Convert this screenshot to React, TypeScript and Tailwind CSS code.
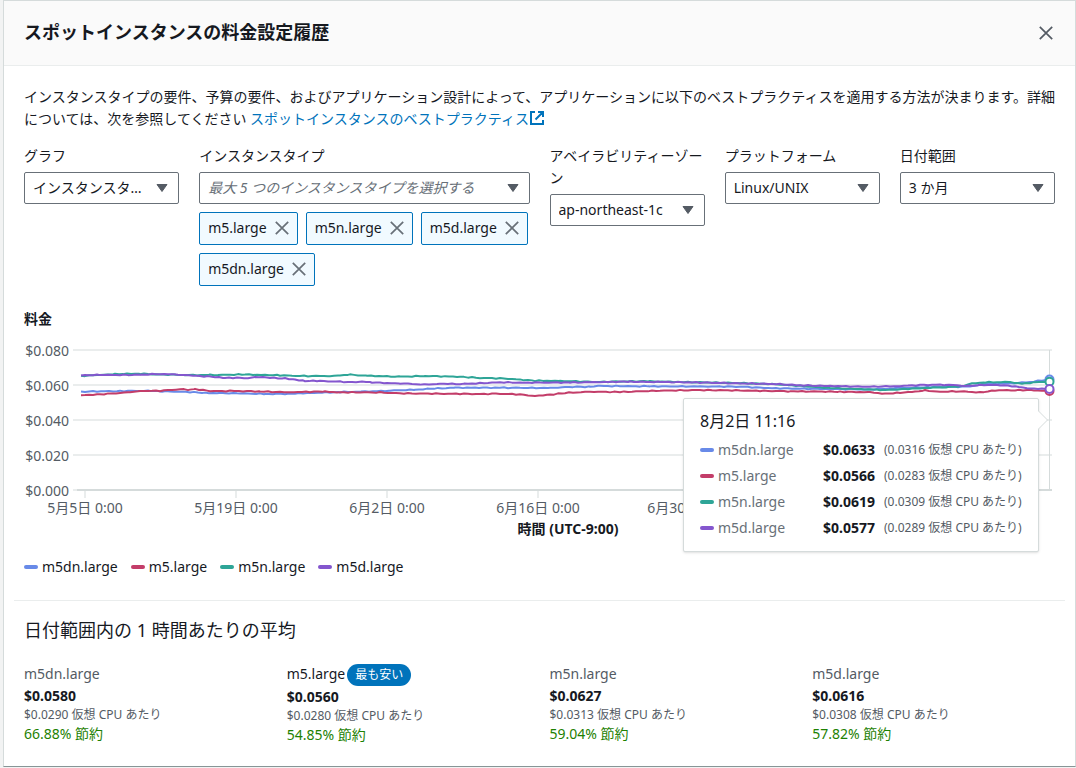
import React, { useState } from 'react';

type Point = [number, number];

interface Series {
  name: string;
  color: string;
  swatch: string;
  price: string;
  vcpu: string;
  endY: number;
  points: Point[];
}

interface Average {
  name: string;
  price: string;
  vcpu: string;
  savings: string;
  cheapest?: boolean;
}

const SERIES: Series[] = [
  {
    name: 'm5dn.large',
    color: '#688ae8',
    swatch: 'bg-[#688ae8]',
    price: '$0.0633',
    vcpu: '(0.0316 仮想 CPU あたり)',
    endY: 379.5,
    points: [
      [81, 391.7], [120, 391], [150, 391], [190, 392], [205, 393], [240, 393.3], [265, 394], [295, 393.7],
      [310, 393], [340, 392], [361, 391.7], [390, 390.7], [415, 389.7], [430, 388.7], [455, 387.7], [500, 387.7],
      [550, 388], [565, 387], [590, 386.7], [600, 386], [650, 386.3], [700, 386.5], [740, 386.7], [776, 388.3],
      [830, 389], [870, 389.5], [900, 388], [930, 387], [950, 387], [970, 386.3], [985, 384], [1010, 383.5],
      [1030, 382], [1049, 379.5],
    ],
  },
  {
    name: 'm5.large',
    color: '#c33d69',
    swatch: 'bg-[#c33d69]',
    price: '$0.0566',
    vcpu: '(0.0283 仮想 CPU あたり)',
    endY: 391,
    points: [
      [81, 395.3], [100, 394.3], [130, 392.3], [140, 391], [160, 390.7], [180, 389.3], [190, 389.7], [195, 389],
      [210, 391], [235, 391], [260, 391.5], [290, 392.3], [310, 391.7], [325, 391.7], [340, 392.3], [380, 392.5],
      [400, 393.3], [440, 393.7], [480, 394], [500, 393.7], [520, 394.5], [535, 396], [550, 394.7], [565, 393],
      [590, 391.7], [620, 392], [660, 390.7], [700, 390], [740, 390.5], [790, 391.3], [840, 391.7], [870, 392.3],
      [885, 393.7], [900, 392.7], [915, 391.7], [925, 390.5], [940, 391.7], [960, 391.3], [980, 392.5], [995, 390.3],
      [1015, 390.3], [1030, 390], [1049, 391],
    ],
  },
  {
    name: 'm5n.large',
    color: '#2ea597',
    swatch: 'bg-[#2ea597]',
    price: '$0.0619',
    vcpu: '(0.0309 仮想 CPU あたり)',
    endY: 381.7,
    points: [
      [81, 375.9], [100, 375], [115, 374], [140, 373.7], [160, 374.5], [185, 375], [210, 375], [245, 374.5],
      [280, 375.3], [300, 376], [330, 376], [340, 375.5], [350, 374.7], [367, 375.7], [400, 376.7], [425, 376],
      [460, 376.7], [480, 378], [500, 378.3], [512, 379], [535, 380.7], [560, 381], [600, 382], [620, 381.5],
      [650, 381.3], [680, 382], [740, 383], [776, 384.3], [800, 386], [830, 388], [860, 389], [885, 390],
      [900, 389.3], [930, 387.7], [960, 386.5], [972, 383.5], [985, 382.3], [1010, 382], [1022, 383.7], [1035, 382.3],
      [1049, 381.7],
    ],
  },
  {
    name: 'm5d.large',
    color: '#8456ce',
    swatch: 'bg-[#8456ce]',
    price: '$0.0577',
    vcpu: '(0.0289 仮想 CPU あたり)',
    endY: 389,
    points: [
      [81, 375.3], [100, 374.8], [120, 375], [140, 374.7], [160, 374], [170, 374.3], [185, 375], [200, 376],
      [215, 377], [225, 378], [240, 377.7], [248, 378.3], [255, 377], [270, 377.7], [285, 378.5], [295, 379.5],
      [305, 381], [320, 381], [340, 381.7], [352, 382.3], [362, 381.5], [372, 382.3], [387, 383.3], [400, 383.3],
      [425, 384.7], [440, 383.7], [460, 384], [480, 383.3], [500, 382.3], [520, 382.7], [545, 382.5], [570, 382.5],
      [600, 382], [630, 381.7], [660, 382], [700, 382.5], [740, 383.3], [776, 384], [800, 385.3], [830, 386],
      [870, 386.7], [900, 386], [920, 385], [945, 384.7], [970, 386], [980, 385], [1000, 385], [1015, 386.5],
      [1030, 388.5], [1049, 389],
    ],
  },
];

const AVERAGES: Average[] = [
  { name: 'm5dn.large', price: '$0.0580', vcpu: '$0.0290 仮想 CPU あたり', savings: '66.88% 節約' },
  { name: 'm5.large', price: '$0.0560', vcpu: '$0.0280 仮想 CPU あたり', savings: '54.85% 節約', cheapest: true },
  { name: 'm5n.large', price: '$0.0627', vcpu: '$0.0313 仮想 CPU あたり', savings: '59.04% 節約' },
  { name: 'm5d.large', price: '$0.0616', vcpu: '$0.0308 仮想 CPU あたり', savings: '57.82% 節約' },
];

const Y_TICKS = [
  { label: '$0.080', y: 350 },
  { label: '$0.060', y: 385 },
  { label: '$0.040', y: 420 },
  { label: '$0.020', y: 455 },
  { label: '$0.000', y: 490 },
];

const X_TICKS = [
  { label: '5月5日 0:00', x: 85 },
  { label: '5月19日 0:00', x: 236 },
  { label: '6月2日 0:00', x: 387 },
  { label: '6月16日 0:00', x: 538 },
  { label: '6月30日 0:00', x: 689 },
];

const toPath = (points: Point[], seed: number) => {
  const out: string[] = [];
  for (let i = 0; i < points.length - 1; i++) {
    const [x0, y0] = points[i];
    const [x1, y1] = points[i + 1];
    for (let x = x0; x < x1; x += 4) {
      const ripple = Math.sin(x * 0.9 + seed * 2) * Math.cos(x * 0.23 + seed) * 0.5;
      out.push(`${x},${(y0 + ((y1 - y0) * (x - x0)) / (x1 - x0) + ripple).toFixed(2)}`);
    }
  }
  const last = points[points.length - 1];
  out.push(`${last[0]},${last[1]}`);
  return `M${out.join('L')}`;
};

const CrossIcon: React.FC = () => (
  <svg className="w-3.5 h-3.5" viewBox="0 0 14 14" fill="none" stroke="currentColor" strokeWidth="1.7" aria-hidden="true">
    <path d="M0.8 0.8 13.2 13.2M13.2 0.8 0.8 13.2" />
  </svg>
);

interface SelectFieldProps {
  id: string;
  label: string;
  options: string[];
  placeholder?: boolean;
}

const SelectField: React.FC<SelectFieldProps> = ({ id, label, options, placeholder }) => (
  <div>
    <label htmlFor={id} className="block mb-[5px]">{label}</label>
    <div className="relative">
      <select
        id={id}
        className={`appearance-none block w-full h-8 pl-2 pr-8 border border-[#687078] rounded-xs bg-white text-ellipsis overflow-hidden whitespace-nowrap ${
          placeholder ? 'italic text-[#687078]' : 'text-[#16191f]'
        }`}
      >
        {options.map(o => <option key={o}>{o}</option>)}
      </select>
      <svg className="absolute right-[11px] top-3 w-3 h-2 pointer-events-none" viewBox="0 0 12 8" aria-hidden="true">
        <path d="M1 0.5H11L6 7.5Z" fill="#545b64" stroke="#545b64" strokeLinejoin="round" />
      </svg>
    </div>
  </div>
);

const PriceChart: React.FC = () => (
  <svg className="block w-full" viewBox="24 330 1031 212" fontSize="14" role="img" aria-label="料金">
    {Y_TICKS.map(t => (
      <g key={t.label}>
        <path d={`M73 ${t.y}H1052`} stroke="#eaeded" strokeWidth="2" />
        <text x="69" y={t.y + 6} textAnchor="end" fill="#545b64">{t.label}</text>
      </g>
    ))}
    <path d="M77 490H1052" stroke="#d5dbdb" strokeWidth="2" />
    {X_TICKS.map(t => (
      <g key={t.label}>
        <path d={`M${t.x} 491V498`} stroke="#eaeded" strokeWidth="2" />
        <text x={t.x} y="513" textAnchor="middle" fill="#545b64">{t.label}</text>
      </g>
    ))}
    <text x="568" y="534" textAnchor="middle" fontWeight="700" fill="#16191f">時間 (UTC-9:00)</text>
    <path d="M1049.5 350V490" stroke="#d5dbdb" />
    {SERIES.map((s, i) => (
      <path key={s.name} d={toPath(s.points, i)} fill="none" stroke={s.color} strokeWidth="2" strokeLinejoin="round" />
    ))}
    {SERIES.map(s => (
      <circle key={s.name} cx="1049.5" cy={s.endY} r="4" fill="#fff" stroke={s.color} strokeWidth="2" />
    ))}
  </svg>
);

const ChartTooltip: React.FC = () => (
  <div className="absolute right-4 top-[68px] w-[356px] px-4 pt-[11px] pb-2.5 bg-white border border-[#d5dbdb] rounded-xs shadow">
    <svg className="absolute -right-2.5 top-[11px] w-2.5 h-5" viewBox="0 0 10 20" aria-hidden="true">
      <path d="M0 0.5 9.5 10 0 19.5Z" fill="#fff" />
      <path d="M0.5 0V1L9.5 10 0.5 19V20" fill="none" stroke="#d5dbdb" />
    </svg>
    <div className="text-base leading-[22px] mb-[5px]">8月2日 11:16</div>
    <table className="w-full whitespace-nowrap">
      <tbody>
        {SERIES.map(s => (
          <tr key={s.name} className="h-[26px]">
            <th scope="row" className="p-0 font-normal text-left text-[#687078]">
              <span className="flex items-center gap-1">
                <span className={`w-3.5 h-1 rounded-full ${s.swatch}`} />
                {s.name}
              </span>
            </th>
            <td className="w-[61px] p-0 font-bold">{s.price}</td>
            <td className="w-[138px] p-0 text-xs text-[#545b64]">{s.vcpu}</td>
          </tr>
        ))}
      </tbody>
    </table>
  </div>
);

const App: React.FC = () => {
  const [types, setTypes] = useState<string[]>(['m5.large', 'm5n.large', 'm5d.large', 'm5dn.large']);

  const removeType = (name: string) => {
    setTypes(prev => prev.filter(t => t !== name));
  };

  return (
    <div className="min-h-screen pl-[3px] pb-px bg-[#f2f3f3] font-['Noto_Sans','Noto_Sans_CJK_JP',sans-serif] text-sm leading-[22px] text-[#16191f]">
      <main className="bg-white border border-[#d5dbdb] border-b-[#879596]">
        <header className="flex items-center justify-between h-[65px] px-5 bg-[#fafafa] border-b border-[#eaeded]">
          <h1 className="pb-0.5 text-lg leading-[22px] font-bold">スポットインスタンスの料金設定履歴</h1>
          <button type="button" aria-label="閉じる" className="p-0.5 text-[#545b64]">
            <CrossIcon />
          </button>
        </header>

        <div className="px-5 pt-5">
          <p className="-mr-2">
            インスタンスタイプの要件、予算の要件、およびアプリケーション設計によって、アプリケーションに以下のベストプラクティスを適用する方法が決まります。詳細については、次を参照してください{' '}
            <a href="#" className="text-[#0073bb]">
              スポットインスタンスのベストプラクティス
              <svg className="inline-block align-[-2px] w-4 h-4" viewBox="0 0 16 16" fill="none" stroke="currentColor" strokeWidth="2" aria-hidden="true">
                <path d="M6 2H2V14H14V10M9 2H14V7M14 2 6.5 9.5" />
              </svg>
            </a>
          </p>

          <div className="grid grid-cols-6 items-start gap-5 mt-[15px]">
            <SelectField id="graph" label="グラフ" options={['インスタンスタイプ', 'アベイラビリティーゾーン']} />
            <div className="col-span-2">
              <SelectField id="types" label="インスタンスタイプ" options={['最大 5 つのインスタンスタイプを選択する']} placeholder />
              <div className="flex flex-wrap gap-2 mt-2">
                {types.map(t => (
                  <div key={t} className="flex items-center gap-2 h-[33px] px-2 pb-px bg-[#f1faff] border border-[#0073bb] rounded-xs">
                    {t}
                    <button type="button" aria-label={`${t} を削除`} onClick={() => removeType(t)} className="text-[#687078]">
                      <CrossIcon />
                    </button>
                  </div>
                ))}
              </div>
            </div>
            <SelectField id="zone" label="アベイラビリティーゾーン" options={['ap-northeast-1c', 'ap-northeast-1a']} />
            <SelectField id="platform" label="プラットフォーム" options={['Linux/UNIX', 'Windows']} />
            <SelectField id="range" label="日付範囲" options={['3 か月', '1 か月']} />
          </div>

          <h2 className="mt-[22px] font-bold">料金</h2>
          <div className="relative">
            <PriceChart />
            <ChartTooltip />
          </div>

          <ul className="flex gap-[13px] mt-3.5">
            {SERIES.map(s => (
              <li key={s.name} className="flex items-center gap-1">
                <span className={`w-3.5 h-1 rounded-full ${s.swatch}`} />
                {s.name}
              </li>
            ))}
          </ul>
        </div>

        <section className="mx-2.5 mt-[22px] px-2.5 pt-[18px] pb-5 border-t border-[#eaeded]">
          <h2 className="text-lg leading-[22px]">日付範囲内の 1 時間あたりの平均</h2>
          <div className="grid grid-cols-4 items-start gap-5 mt-[22px]">
            {AVERAGES.map(a => (
              <div key={a.name}>
                <div className={`flex items-start gap-0.5 ${a.cheapest ? '' : 'text-[#545b64]'}`}>
                  {a.name}
                  {a.cheapest && (
                    <span className="mt-px px-2 bg-[#0073bb] text-white text-xs leading-[22px] rounded-full">最も安い</span>
                  )}
                </div>
                <div className="font-bold">{a.price}</div>
                <div className="text-xs leading-4 text-[#545b64]">{a.vcpu}</div>
                <div className="text-[#1d8102]">{a.savings}</div>
              </div>
            ))}
          </div>
        </section>
      </main>
    </div>
  );
};

export default App;
